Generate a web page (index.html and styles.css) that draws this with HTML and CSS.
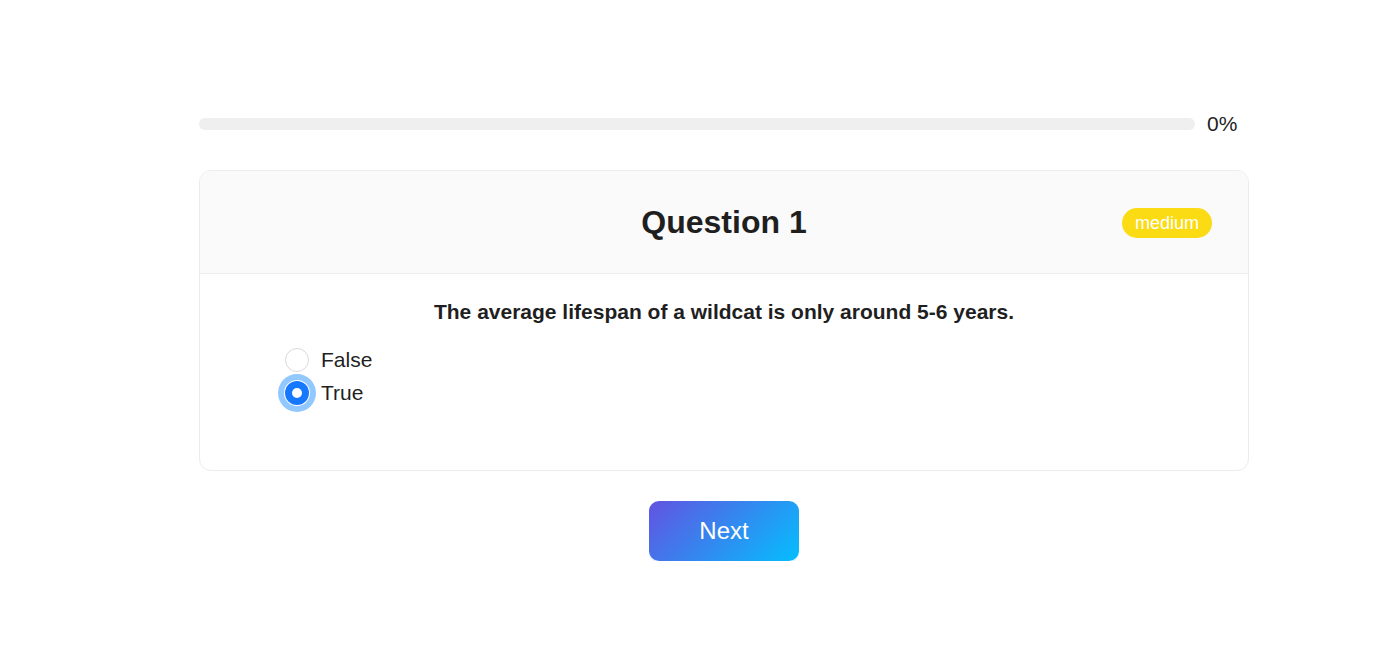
FILE: index.html
```html
<!DOCTYPE html>
<html>
<head>
<meta charset="utf-8">
<link rel="stylesheet" href="styles.css">
</head>
<body>
<div class="quiz">
  <div class="progress-row">
    <div class="progress-track"><div class="progress-fill" style="width:0%"></div></div>
    <span class="progress-label">0%</span>
  </div>
  <div class="card">
    <div class="card-head">
      <h1 class="title">Question 1</h1>
      <span class="badge">medium</span>
    </div>
    <div class="card-body">
      <p class="question">The average lifespan of a wildcat is only around 5-6 years.</p>
      <div class="options">
        <label class="option"><span class="radio"></span><span class="option-text">False</span></label>
        <label class="option"><span class="radio checked"></span><span class="option-text">True</span></label>
      </div>
    </div>
  </div>
  <div class="actions">
    <button class="next">Next</button>
  </div>
</div>
</body>
</html>
```

FILE: styles.css
```css
* { box-sizing: border-box; }
html, body { margin: 0; padding: 0; background: #fff; }
body {
  font-family: "Liberation Sans", Arial, sans-serif;
  color: #1f1f1f;
}
.quiz {
  width: 1050px;
  margin-left: 199px;
  padding-top: 110px;
}
.progress-row {
  display: flex;
  align-items: center;
  height: 28px;
}
.progress-track {
  width: 996px;
  height: 12px;
  border-radius: 6px;
  background: #efefef;
  overflow: hidden;
}
.progress-fill { height: 100%; background: #1677ff; }
.progress-label {
  margin-left: 12px;
  font-size: 21px;
  color: #1f1f1f;
}
.card {
  margin-top: 32px;
  border: 1px solid #ececec;
  border-radius: 12px;
  overflow: hidden;
  height: 301px;
}
.card-head {
  position: relative;
  height: 103px;
  background: #fafafa;
  border-bottom: 1px solid #ececec;
  display: flex;
  align-items: center;
  justify-content: center;
}
.title {
  margin: 0;
  font-size: 32px;
  font-weight: bold;
  color: #1f1f1f;
}
.badge {
  position: absolute;
  right: 36px;
  top: 37px;
  height: 30px;
  padding: 0 13px;
  border-radius: 15px;
  background: #fadb14;
  color: #fff;
  font-size: 18px;
  line-height: 30px;
}
.card-body {
  padding: 24px 0 0 0;
}
.question {
  margin: 0;
  text-align: center;
  font-size: 21px;
  font-weight: bold;
  line-height: 28px;
  color: #1f1f1f;
}
.options {
  margin-top: 22px;
  padding-left: 85px;
  display: flex;
  flex-direction: column;
  gap: 9px;
}
.option {
  display: flex;
  align-items: center;
  height: 24px;
  font-size: 21px;
}
.radio {
  width: 24px;
  height: 24px;
  border-radius: 50%;
  border: 1px solid #d9d9d9;
  background: #fff;
  margin-right: 12px;
  flex: none;
  position: relative;
}
.radio.checked {
  border: none;
  background: #1677ff;
  box-shadow: 0 0 0 1px #fff, 0 0 0 7px #91c8ff;
}
.radio.checked::after {
  content: "";
  position: absolute;
  left: 7px;
  top: 7px;
  width: 10px;
  height: 10px;
  border-radius: 50%;
  background: #fff;
}
.option-text { color: #1f1f1f; }
.actions {
  display: flex;
  justify-content: center;
  margin-top: 30px;
}
.next {
  width: 150px;
  height: 60px;
  border: none;
  border-radius: 10px;
  background: linear-gradient(135deg, #6253e1, #04befe);
  color: #fff;
  font-family: "Liberation Sans", Arial, sans-serif;
  font-size: 24px;
  box-shadow: 0 2px 0 rgba(5, 145, 255, 0.1);
  cursor: pointer;
}
```
